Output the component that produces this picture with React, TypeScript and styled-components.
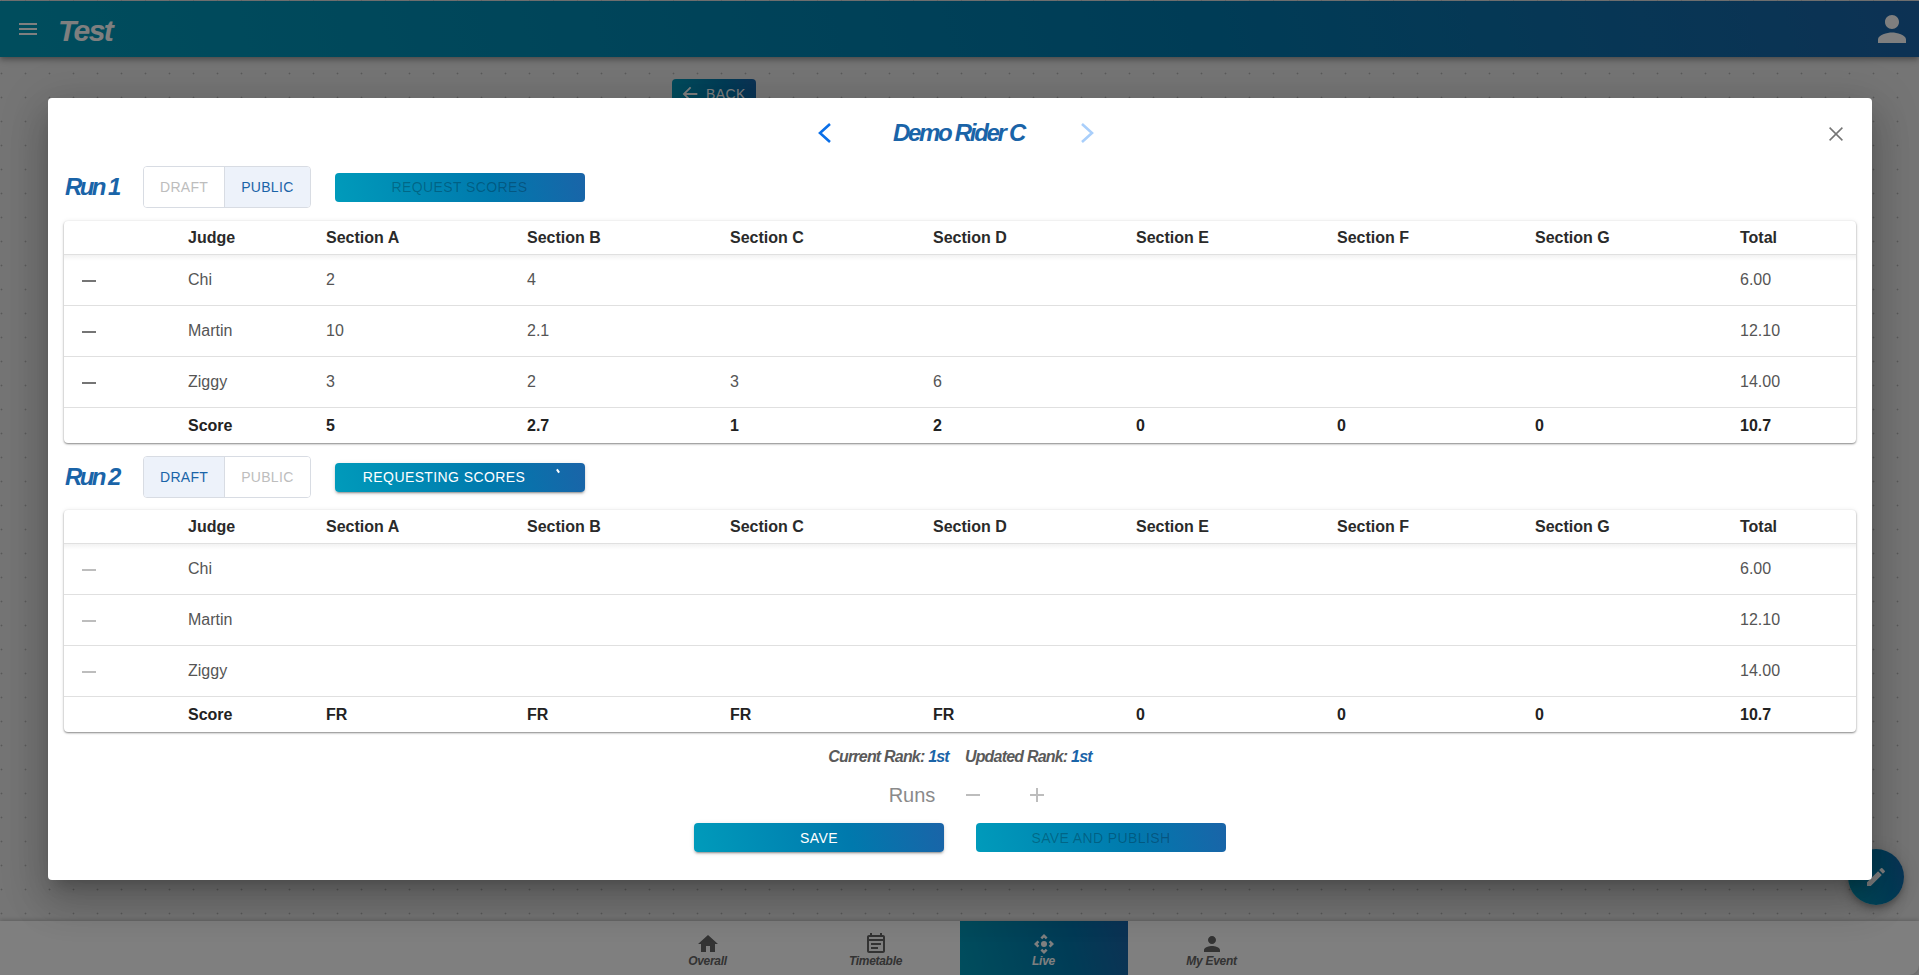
import React from "react";
import styled, { createGlobalStyle } from "styled-components";
import {
    MdAdd,
    MdArrowBack,
    MdControlCamera,
    MdEdit,
    MdHome,
    MdMenu,
    MdOutlineEventNote,
    MdPerson,
    MdRemove,
} from "react-icons/md";

const GRADIENT = "linear-gradient(75deg, #009bbb 0%, #0079ad 62%, #1a64a8 100%)";
const BLUE = "#1a64a8";

const COLUMNS = [108, 138, 201, 203, 203, 203, 201, 198, 205, 132];
const HEADINGS = ["Judge", "Section A", "Section B", "Section C", "Section D", "Section E", "Section F", "Section G", "Total"];

const RUNS = [
    {
        name: "Run 1",
        status: "public",
        busy: false,
        dash: "#757575",
        judges: [
            ["Chi", "2", "4", "", "", "", "", "", "6.00"],
            ["Martin", "10", "2.1", "", "", "", "", "", "12.10"],
            ["Ziggy", "3", "2", "3", "6", "", "", "", "14.00"],
        ],
        score: ["Score", "5", "2.7", "1", "2", "0", "0", "0", "10.7"],
    },
    {
        name: "Run 2",
        status: "draft",
        busy: true,
        dash: "#bdbdbd",
        judges: [
            ["Chi", "", "", "", "", "", "", "", "6.00"],
            ["Martin", "", "", "", "", "", "", "", "12.10"],
            ["Ziggy", "", "", "", "", "", "", "", "14.00"],
        ],
        score: ["Score", "FR", "FR", "FR", "FR", "0", "0", "0", "10.7"],
    },
];

const TABS = [
    { name: "Overall", icon: <MdHome /> },
    { name: "Timetable", icon: <MdOutlineEventNote /> },
    { name: "Live", icon: <MdControlCamera />, active: true },
    { name: "My Event", icon: <MdPerson /> },
];

function App() {
    return (
        <Page>
            <GlobalStyle />
            <TopBar>
                <MenuSlot>
                    <MdMenu />
                </MenuSlot>
                <Logo>Test</Logo>
                <AccountSlot>
                    <MdPerson />
                </AccountSlot>
            </TopBar>
            <Main>
                <BackButton>
                    <MdArrowBack />
                    Back
                </BackButton>
            </Main>
            <BottomBar>
                {TABS.map((tab) => (
                    <Tab key={tab.name} $active={tab.active}>
                        {tab.icon}
                        <span>{tab.name}</span>
                    </Tab>
                ))}
            </BottomBar>
            <Fab>
                <MdEdit />
            </Fab>

            <Overlay>
                <Modal>
                    <CloseButton>
                        <svg width="14" height="14" viewBox="0 0 14 14">
                            <path d="M.6.6l12.8 12.8M13.4.6L.6 13.4" stroke="#757575" strokeWidth="1.5" fill="none" />
                        </svg>
                    </CloseButton>
                    <ModalHeader>
                        <Chevron width="15" height="20" viewBox="0 0 15 20" $gap="0 61px 0 0">
                            <path d="M13 1L3 10l10 9" stroke="#0a6fe8" strokeWidth="2.6" fill="none" />
                        </Chevron>
                        <RiderName>Demo Rider C</RiderName>
                        <Chevron width="15" height="20" viewBox="0 0 15 20" $gap="0 0 0 56px">
                            <path d="M2 1l10 9-10 9" stroke="#a9cffb" strokeWidth="2.6" fill="none" />
                        </Chevron>
                    </ModalHeader>

                    {RUNS.map((run, runIdx) => (
                        <RunBlock key={run.name}>
                            <RunRow $below={runIdx === 0 ? 13 : 12}>
                                <RunName>{run.name}</RunName>
                                <Toggle>
                                    <ToggleButton $on={run.status === "draft"}>Draft</ToggleButton>
                                    <ToggleButton $on={run.status === "public"}>Public</ToggleButton>
                                </Toggle>
                                <RequestButton disabled={!run.busy} $busy={run.busy}>
                                    {run.busy ? "Requesting Scores" : "Request Scores"}
                                    {run.busy && <Spinner />}
                                </RequestButton>
                            </RunRow>
                            <ScoreTable>
                                <colgroup>
                                    {COLUMNS.map((width, idx) => (
                                        <Col key={idx} $width={width} />
                                    ))}
                                </colgroup>
                                <thead>
                                    <tr>
                                        <Th />
                                        {HEADINGS.map((heading) => (
                                            <Th key={heading}>{heading}</Th>
                                        ))}
                                    </tr>
                                </thead>
                                <tbody>
                                    {run.judges.map((judge) => (
                                        <tr key={judge[0]}>
                                            <DashCell>
                                                <MdRemove color={run.dash} />
                                            </DashCell>
                                            {judge.map((value, idx) => (
                                                <Td key={idx}>{value}</Td>
                                            ))}
                                        </tr>
                                    ))}
                                    <tr>
                                        <ScoreCell />
                                        {run.score.map((value, idx) => (
                                            <ScoreCell key={idx}>{value}</ScoreCell>
                                        ))}
                                    </tr>
                                </tbody>
                            </ScoreTable>
                        </RunBlock>
                    ))}

                    <RankRow>
                        <span>
                            Current Rank: <b>1st</b>
                        </span>
                        <span>
                            Updated Rank: <b>1st</b>
                        </span>
                    </RankRow>
                    <RunsRow>
                        <RunsLabel>Runs</RunsLabel>
                        <MdRemove />
                        <MdAdd />
                    </RunsRow>
                    <Actions>
                        <GradientButton>Save</GradientButton>
                        <GradientButton disabled>Save and publish</GradientButton>
                    </Actions>
                </Modal>
            </Overlay>
        </Page>
    );
}

export default App;

const GlobalStyle = createGlobalStyle`
    html, body {
        margin: 0;
        padding: 0;
        background: #eaeaea;
    }
    * {
        box-sizing: border-box;
    }
    body {
        font-family: "Liberation Sans", Arial, sans-serif;
    }
`;

const Page = styled.div`
    position: relative;
    display: flex;
    flex-direction: column;
    height: 975px;
    overflow: hidden;
    padding-top: 1px;
    background-color: #eaeaea;
    background-image: radial-gradient(circle at 1.5px 1.5px, #b4b4b4 0.8px, transparent 1.1px);
    background-size: 24px 24px;
`;

const TopBar = styled.header`
    display: flex;
    align-items: center;
    flex: 0 0 56px;
    padding: 0 6px 0 16px;
    background: ${GRADIENT};
    box-shadow: 0 2px 4px -1px rgba(0, 0, 0, 0.2), 0 4px 5px rgba(0, 0, 0, 0.14), 0 1px 10px rgba(0, 0, 0, 0.12);
`;

const MenuSlot = styled.div`
    display: flex;
    color: #fff;
    font-size: 24px;
    margin-right: 18px;
`;

const Logo = styled.div`
    padding-top: 4px;
    color: #fff;
    font-size: 30px;
    font-weight: bold;
    font-style: italic;
    letter-spacing: -1.6px;
`;

const AccountSlot = styled.div`
    display: flex;
    margin-left: auto;
    color: #fff;
    font-size: 42px;
`;

const Main = styled.main`
    flex: 1;
    padding: 22px 0 0 672px;
`;

const BackButton = styled.button`
    display: inline-flex;
    align-items: center;
    gap: 5px;
    width: 84px;
    height: 29px;
    padding: 0 0 0 7px;
    border: 0;
    border-radius: 4px;
    background: ${GRADIENT};
    color: #fff;
    font: 14px "Liberation Sans", Arial, sans-serif;
    letter-spacing: 0.4px;
    text-transform: uppercase;
    svg {
        font-size: 22px;
    }
`;

const BottomBar = styled.nav`
    display: flex;
    justify-content: center;
    flex: 0 0 54px;
    background: #fff;
    border-bottom-right-radius: 10px;
    box-shadow: 0 -1px 4px rgba(0, 0, 0, 0.2);
`;

const Tab = styled.div<{ $active?: boolean }>`
    display: flex;
    flex-direction: column;
    align-items: center;
    width: 168px;
    padding-top: 11px;
    background: ${(p) => (p.$active ? GRADIENT : "transparent")};
    color: ${(p) => (p.$active ? "#fff" : "#666")};
    font-size: 12px;
    font-weight: bold;
    font-style: italic;
    letter-spacing: -0.3px;
    line-height: 14px;
    svg {
        font-size: 24px;
        margin-bottom: -2px;
    }
`;

const Fab = styled.div`
    position: absolute;
    right: 15px;
    bottom: 70px;
    display: flex;
    align-items: center;
    justify-content: center;
    width: 56px;
    height: 56px;
    border-radius: 50%;
    background: ${GRADIENT};
    color: #fff;
    font-size: 24px;
    box-shadow: 0 3px 5px -1px rgba(0, 0, 0, 0.2), 0 6px 10px rgba(0, 0, 0, 0.14), 0 1px 18px rgba(0, 0, 0, 0.12);
`;

const Overlay = styled.div`
    position: absolute;
    inset: 0;
    display: flex;
    padding: 98px 47px 95px 48px;
    background: rgba(0, 0, 0, 0.5);
`;

const Modal = styled.section`
    position: relative;
    flex: 1;
    padding: 0 16px;
    border-radius: 4px;
    background: #fff;
    box-shadow: 0 11px 15px -7px rgba(0, 0, 0, 0.2), 0 24px 38px 3px rgba(0, 0, 0, 0.14), 0 9px 46px 8px rgba(0, 0, 0, 0.12);
`;

const CloseButton = styled.div`
    position: absolute;
    top: 29px;
    right: 29px;
    display: flex;
`;

const ModalHeader = styled.div`
    display: flex;
    align-items: center;
    justify-content: center;
    height: 68px;
    padding: 2px 8px 0 0;
`;

const Chevron = styled.svg<{ $gap: string }>`
    margin: ${(p) => p.$gap};
`;

const RiderName = styled.div`
    color: ${BLUE};
    font-size: 24px;
    font-weight: bold;
    font-style: italic;
    letter-spacing: -2.3px;
`;

const RunBlock = styled.div`
    margin-bottom: 13px;
`;

const RunRow = styled.div<{ $below: number }>`
    display: flex;
    align-items: center;
    height: 42px;
    margin-bottom: ${(p) => p.$below}px;
    padding-left: 1px;
`;

const RunName = styled.h2`
    flex: 0 0 78px;
    margin: 0;
    color: ${BLUE};
    font-size: 24px;
    font-weight: bold;
    font-style: italic;
    letter-spacing: -2.6px;
`;

const Toggle = styled.div`
    display: flex;
    height: 42px;
    border: 1px solid #d8dce3;
    border-radius: 4px;
    overflow: hidden;
`;

const ToggleButton = styled.div<{ $on: boolean }>`
    display: flex;
    align-items: center;
    padding: 0 16px;
    background: ${(p) => (p.$on ? "#edf2fa" : "#fff")};
    color: ${(p) => (p.$on ? BLUE : "#bdbdbd")};
    font-size: 14px;
    letter-spacing: 0.3px;
    text-transform: uppercase;
    & + & {
        border-left: 1px solid #d8dce3;
    }
`;

const GradientButton = styled.button`
    position: relative;
    width: 250px;
    height: 29px;
    padding: 0;
    border: 0;
    border-radius: 4px;
    background: ${GRADIENT};
    color: #fff;
    font: 14px "Liberation Sans", Arial, sans-serif;
    letter-spacing: 0.4px;
    text-transform: uppercase;
    box-shadow: 0 3px 1px -2px rgba(0, 0, 0, 0.2), 0 2px 2px rgba(0, 0, 0, 0.14), 0 1px 5px rgba(0, 0, 0, 0.12);
    &:disabled {
        color: rgba(0, 0, 0, 0.26);
        box-shadow: none;
    }
`;

const RequestButton = styled(GradientButton)<{ $busy: boolean }>`
    margin-left: 24px;
    padding-right: ${(p) => (p.$busy ? "31px" : "0")};
`;

const Spinner = styled.i`
    position: absolute;
    top: 6px;
    right: 26px;
    width: 2px;
    height: 4px;
    background: #fff;
    transform: rotate(-35deg);
`;

const ScoreTable = styled.table`
    width: 1792px;
    table-layout: fixed;
    border-collapse: separate;
    border-spacing: 0;
    border-radius: 4px;
    background: #fff;
    box-shadow: 0 1px 2px rgba(0, 0, 0, 0.45), 0 0 5px rgba(0, 0, 0, 0.08);
    font-size: 16px;
    tbody tr:first-child td {
        background: linear-gradient(rgba(0, 0, 0, 0.05), transparent 6px);
    }
`;

const Col = styled.col<{ $width: number }>`
    width: ${(p) => p.$width}px;
`;

const Th = styled.th`
    height: 34px;
    padding: 0 16px;
    border-bottom: 1px solid #e0e0e0;
    color: #2a2a2a;
    font-weight: bold;
    text-align: left;
`;

const Td = styled.td`
    height: 51px;
    padding: 0 16px 1px;
    border-bottom: 1px solid #e0e0e0;
    color: #555;
`;

const DashCell = styled(Td)`
    padding: 2px 0 0 13px;
    font-size: 24px;
    line-height: 0;
`;

const ScoreCell = styled.td`
    height: 35px;
    padding: 0 16px;
    color: #222;
    font-weight: bold;
`;

const RankRow = styled.div`
    display: flex;
    justify-content: center;
    gap: 16px;
    height: 20px;
    margin-top: 15px;
    color: #5a5a5a;
    font-size: 16px;
    font-weight: bold;
    font-style: italic;
    line-height: 20px;
    letter-spacing: -0.8px;
    b {
        color: ${BLUE};
    }
`;

const RunsRow = styled.div`
    display: flex;
    align-items: center;
    justify-content: center;
    height: 30px;
    margin-top: 13px;
    padding-left: 18px;
    color: #bdbdbd;
    font-size: 24px;
    svg + svg {
        margin-left: 40px;
    }
`;

const RunsLabel = styled.span`
    margin-right: 26px;
    color: #8a8a8a;
    font-size: 20px;
`;

const Actions = styled.div`
    display: flex;
    justify-content: center;
    gap: 32px;
    margin-top: 13px;
`;
